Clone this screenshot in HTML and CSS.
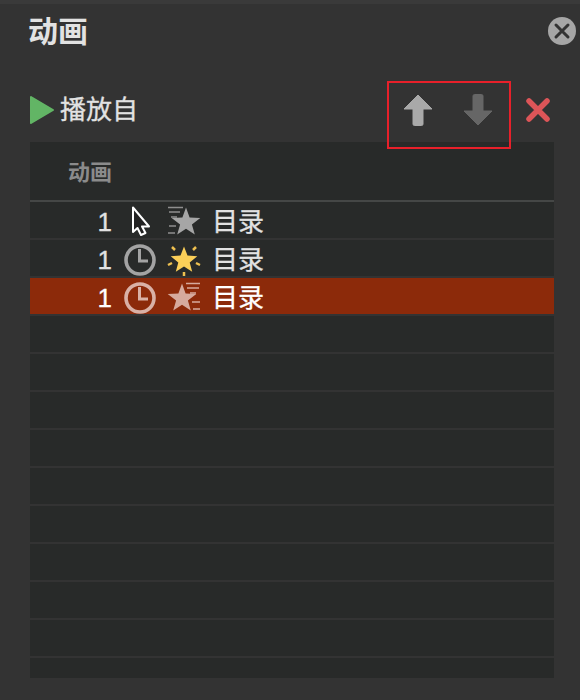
FILE: index.html
```html
<!DOCTYPE html>
<html lang="zh">
<head>
    <meta charset="UTF-8">
    <title>动画</title>
    <link rel="stylesheet" href="styles.css">
</head>
<body>
    <div class="panel">
        <header class="title-bar">
            <h1>动画</h1>
            <button class="close-btn" aria-label="关闭">
                <svg width="28" height="28" viewBox="0 0 28 28"><circle cx="14" cy="14" r="14" fill="#a6a6a6"/><path d="M8 8l12 12M20 8L8 20" stroke="#333" stroke-width="3" stroke-linecap="round"/></svg>
            </button>
        </header>

        <div class="toolbar">
            <div class="play">
                <svg width="26" height="30" viewBox="0 0 26 30"><path d="M1 2l22 13L1 28z" fill="#62b565" stroke="#62b565" stroke-width="2" stroke-linejoin="round"/></svg>
                <span>播放自</span>
            </div>
            <div class="order-btns">
                <svg width="30" height="34" viewBox="0 0 30 34"><path d="M15 2L1 16h9v15a1.500 1.500 0 0 0 1.500 1.500h7A1.500 1.500 0 0 0 20 31V16h9z" fill="#a9a9a9" stroke="#a9a9a9" stroke-linejoin="round"/></svg>
                <svg width="30" height="34" viewBox="0 0 30 34"><path d="M15 32L1 18h9V3a1.500 1.500 0 0 1 1.500-1.500h7A1.500 1.500 0 0 1 20 3v15h9z" fill="#666" stroke="#666" stroke-linejoin="round"/></svg>
            </div>
            <svg class="delete" width="28" height="28" viewBox="0 0 28 28"><path d="M5 5l18 18M23 5L5 23" stroke="#dd5558" stroke-width="5.500" stroke-linecap="round"/></svg>
            <div class="highlight"></div>
        </div>

        <div class="list">
            <div class="list-head">动画</div>

            <div class="row">
                <span class="num">1</span>
                <span class="icon">
                    <svg width="32" height="32" viewBox="0 0 32 32"><path d="M9 1.500V26l4.500-4 3.500 7 4.500-2-3.500-6.500H25z" fill="#222" stroke="#fff" stroke-width="2" stroke-linejoin="round"/></svg>
                </span>
                <span class="icon">
                    <svg width="32" height="32" viewBox="0 0 32 32"><path d="M18 1.500l3.600 10 10.700.4-8.400 6.500 2.900 10.200-8.800-5.900-8.800 5.900 2.900-10.200-8.400-6.500 10.700-.4z" fill="#a6a6a6"/><path d="M0 1.500h15M1 6h11M3 11h6M1 20h7M0 27h7" stroke="#8e8e8e" stroke-width="1.500"/></svg>
                </span>
                <span class="label">目录</span>
            </div>
            <div class="row">
                <span class="num">1</span>
                <span class="icon">
                    <svg width="32" height="32" viewBox="0 0 32 32"><circle cx="16" cy="16" r="14" fill="none" stroke="#a3a3a3" stroke-width="3.600"/><path d="M15.500 5v12H24" fill="none" stroke="#a3a3a3" stroke-width="3"/></svg>
                </span>
                <span class="icon">
                    <svg width="32" height="32" viewBox="0 0 32 32"><path d="M16 2.500l3.500 9.100 9.800.6-7.600 6.200 2.500 9.400-8.200-5.300-8.200 5.300 2.500-9.400-7.600-6.200 9.800-.6z" fill="#fbcf58"/><path d="M4 3l3 3M28 3l-3 3M0 21l4-2M32 21l-4-2M16 32v-4" stroke="#eec050" stroke-width="2.500"/></svg>
                </span>
                <span class="label">目录</span>
            </div>
            <div class="row selected">
                <span class="num">1</span>
                <span class="icon">
                    <svg width="32" height="32" viewBox="0 0 32 32"><circle cx="16" cy="16" r="14" fill="none" stroke="#d9b1a6" stroke-width="3.600"/><path d="M15.500 5v12H24" fill="none" stroke="#d9b1a6" stroke-width="3"/></svg>
                </span>
                <span class="icon">
                    <svg width="32" height="32" viewBox="0 0 32 32"><path d="M14 1.500l3.600 10 10.700.4-8.400 6.500 2.900 10.200-8.800-5.900-8.800 5.900 2.900-10.200L-.3 11.900l10.700-.4z" fill="#d6aa9d"/><path d="M18 1.500h14M19 6h12M22 11h6M24 20h8M25 27h7" stroke="#d6aa9d" stroke-width="1.500"/></svg>
                </span>
                <span class="label">目录</span>
            </div>
            <div class="row"></div>
            <div class="row"></div>
            <div class="row"></div>
            <div class="row"></div>
            <div class="row"></div>
            <div class="row"></div>
            <div class="row"></div>
            <div class="row"></div>
            <div class="row"></div>
            <div class="row"></div>
        </div>
    </div>
</body>
</html>
```

FILE: styles.css
```css
* {
    box-sizing: border-box;
}

body {
    margin: 0;
    background-color: #333333;
    font-family: "Liberation Sans", "Noto Sans CJK SC", sans-serif;
}

.panel {
    width: 580px;
    height: 700px;
    padding: 0 26px 22px 30px;
    border-top: 4px solid #3a3a3a;
    overflow: hidden;
}

.title-bar {
    height: 60px;
    display: flex;
    align-items: flex-start;
    justify-content: space-between;
    padding-top: 9px;
}

h1 {
    margin: 0 0 0 -2px;
    font-size: 30px;
    line-height: 38px;
    font-weight: bold;
    color: #e2e2e2;
}

.close-btn {
    width: 28px;
    height: 28px;
    margin: 4px -22px 0 0;
    padding: 0;
    border: none;
    background: none;
}

.close-btn svg {
    display: block;
}

.toolbar {
    position: relative;
    height: 78px;
    display: flex;
    align-items: flex-start;
    padding-top: 30px;
}

.play {
    display: flex;
    align-items: center;
    gap: 4px;
    font-size: 26px;
    line-height: 32px;
    color: #e2e2e2;
    -webkit-text-stroke: 0.3px #e2e2e2;
}

.order-btns {
    display: flex;
    gap: 30px;
    margin-left: auto;
    margin-right: 31px;
    margin-top: -1px;
}

.delete {
    margin: 2px 2px 0 0;
}

/* red annotation box over the arrows */
.highlight {
    position: absolute;
    left: 357px;
    top: 17px;
    width: 124px;
    height: 68px;
    border: 2px solid #e8202a;
}

.list {
    height: 536px;
    background-color: #282a29;
    overflow: hidden;
}

.list-head {
    height: 60px;
    padding: 16px 0 0 38px;
    border-bottom: 2px solid #454746;
    font-size: 22px;
    line-height: 30px;
    font-weight: bold;
    color: #8b8b8b;
}

.row {
    height: 38px;
    padding-top: 4px;
    display: flex;
    align-items: center;
    border-bottom: 2px solid #333333;
    color: #e2e2e2;
}

.row.selected {
    background-color: #8c2a0a;
    color: #fff;
}

.num {
    width: 82px;
    text-align: right;
    font-size: 26px;
    line-height: 32px;
    -webkit-text-stroke: 0.3px currentColor;
}

.icon {
    width: 32px;
    height: 32px;
    margin-left: 12px;
}

.icon svg {
    display: block;
    overflow: visible;
}

.label {
    margin-left: 12px;
    font-size: 26px;
    line-height: 32px;
    -webkit-text-stroke: 0.3px currentColor;
}
```
